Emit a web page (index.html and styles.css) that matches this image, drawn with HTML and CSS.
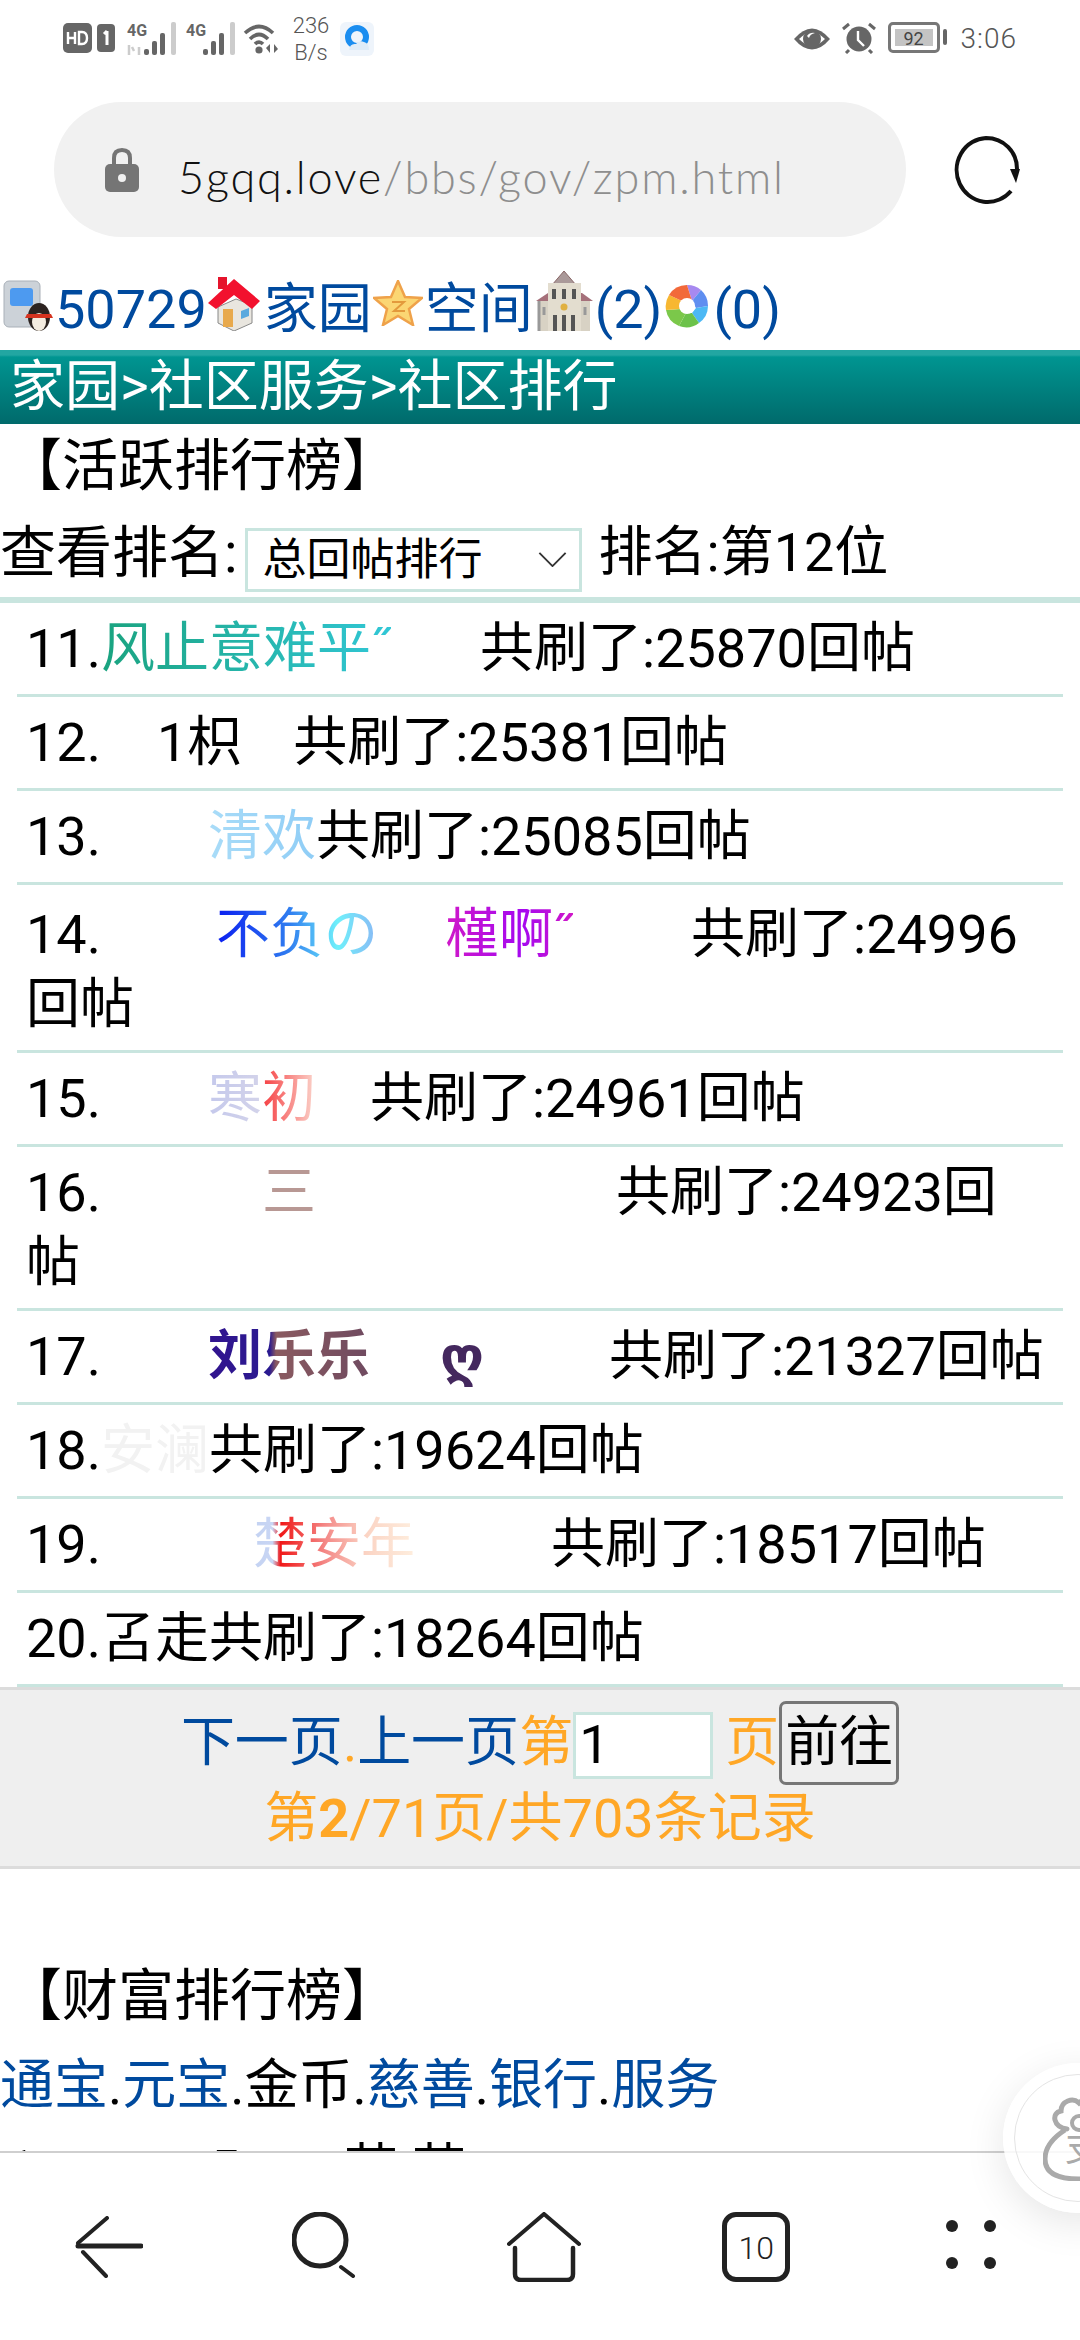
FILE: index.html
```html
<!DOCTYPE html>
<html lang="zh">
<head>
    <meta charset="UTF-8">
    <meta name="viewport" content="width=device-width, initial-scale=1.0">
    <title>社区排行</title>
    <link rel="stylesheet" href="styles.css">
</head>
<body>
<div class="phone">

    <div class="status-bar">
        <div class="status-left">
            <svg class="ic-hd" viewBox="0 0 54 31"><rect x="0" y="0" width="29" height="30" rx="5" fill="#666"/><rect x="34" y="1" width="18" height="28" rx="4" fill="#666"/><path d="M44 8v14M41 11l3-3" stroke="#fff" stroke-width="3" fill="none"/><path d="M5 9v12M5 15h7M12 9v12M16 9v12h3q5 0 5-6t-5-6z" stroke="#fff" stroke-width="2.4" fill="none"/></svg>
            <div class="sig">
                <span class="sig-label">4G</span>
                <svg viewBox="0 0 52 36" class="ic-sig"><path d="M2 24v10M7 30l-2-4M12 26v8" stroke="#ccc" stroke-width="2.5" fill="none"/><rect x="17" y="28" width="5" height="6" rx="2" fill="#666"/><rect x="25" y="20" width="5" height="14" rx="2" fill="#666"/><rect x="33" y="12" width="5" height="22" rx="2" fill="#666"/><rect x="44" y="1" width="5" height="33" rx="2" fill="#ccc"/></svg>
            </div>
            <div class="sig sig-b">
                <span class="sig-label">4G</span>
                <svg viewBox="0 0 52 36" class="ic-sig"><rect x="17" y="28" width="5" height="6" rx="2" fill="#666"/><rect x="25" y="20" width="5" height="14" rx="2" fill="#666"/><rect x="33" y="12" width="5" height="22" rx="2" fill="#666"/><rect x="44" y="1" width="5" height="33" rx="2" fill="#ccc"/></svg>
            </div>
            <svg class="ic-wifi" viewBox="0 0 38 32"><path d="M2 11q14-13 28 0M7 17q9-9 18 0M12 22q4-4 8 0" stroke="#666" stroke-width="3.6" fill="none"/><circle cx="16" cy="28" r="3.6" fill="#666"/><path d="M27 22v9l-4-5zM31 22v9l4-4z" fill="#666"/></svg>
            <div class="speed"><span>236</span><span>B/s</span></div>
            <svg class="ic-qq" viewBox="0 0 34 34"><rect width="34" height="34" rx="6" fill="#eef4fb"/><circle cx="17" cy="15" r="9" stroke="#1a8df0" stroke-width="6" fill="none"/><path d="M9 28q1-7 7-6 3-4 8-2 5 1 5 8z" fill="#dfecf8"/></svg>
        </div>
        <div class="status-right">
            <svg class="ic-eye" viewBox="0 0 38 28"><path d="M1 14Q19-7 37 14 19 35 1 14z" fill="#666"/><path d="M6 14Q19 1 32 14 19 27 6 14z" fill="#fff"/><circle cx="19" cy="14" r="9" fill="#666"/><path d="M14 11q3-4 8-3-5 1-6 5z" fill="#fff"/></svg>
            <svg class="ic-alarm" viewBox="0 0 34 32"><circle cx="17" cy="17" r="12.5" fill="#666"/><path d="M1 7l6-5M33 7l-6-5M7 28l-3 3M27 28l3 3" stroke="#666" stroke-width="3"/><path d="M16 9v9l6 6" stroke="#fff" stroke-width="2.4" fill="none"/></svg>
            <div class="battery"><div class="battery-fill">92</div></div>
            <div class="battery-tip"></div>
            <div class="clock">3:06</div>
        </div>
    </div>

    <div class="url-row">
        <div class="url-box">
            <svg class="ic-lock" viewBox="0 0 34 44"><path d="M9 20V10q0-8 8-8t8 8v10" stroke="#757575" stroke-width="4" fill="none"/><rect y="16" width="34" height="28" rx="5" fill="#757575"/><circle cx="17" cy="30" r="4" fill="#f1f1f1"/></svg>
            <div class="url-text">5gqq.love<span class="url-path">/bbs/gov/zpm.html</span></div>
        </div>
        <svg class="ic-reload" viewBox="0 0 68 68"><path d="M58 55A31 32 0 1 1 33 2c18 0 31 14 31 31" stroke="#111" stroke-width="4" fill="none"/><path d="M57 33h10l-4 14z" fill="#111"/></svg>
    </div>

    <div class="page">
        <div class="top-links">
            <svg class="pic pic-qq" viewBox="0 0 50 52"><rect x="1" y="1" width="36" height="46" rx="5" fill="#ccd2d8" stroke="#a9b0b8"/><rect x="7" y="8" width="23" height="18" rx="3" fill="#4d9af0"/><ellipse cx="36" cy="37" rx="11" ry="14" fill="#2c2320"/><ellipse cx="36" cy="42" rx="7" ry="9" fill="#f4ece0"/><path d="M24 34h24l2 4H22z" fill="#d5331f"/></svg><a>50729</a><svg class="pic pic-house" viewBox="0 0 52 54"><rect x="10" y="0" width="9" height="12" fill="#e5142c"/><path d="M10 30l18-8 16 6v18L26 54 10 46z" fill="#e9e6df" stroke="#888"/><path d="M0 26L26 2l26 22-8 8-18-14-18 14z" fill="#f2112e"/><rect x="15" y="32" width="10" height="18" fill="#e8a94c"/><path d="M33 34l8-3v8l-8 3z" fill="#5aa9de"/></svg><a>家园</a><svg class="pic pic-star" viewBox="0 0 50 46"><path d="M25 1l7 16 17 1-13 11 4 16-15-9-15 9 4-16L1 18l17-1z" fill="#fbd673" stroke="#efa24a" stroke-width="2.5"/><path d="M19 22h12l-10 9h11" stroke="#e39a3c" stroke-width="2" fill="none"/></svg><a>空间</a><svg class="pic pic-bank" viewBox="0 0 57 60"><path d="M28 0l12 14H16z" fill="#a99" stroke="#866"/><rect x="14" y="14" width="30" height="8" fill="#d6cfc2"/><path d="M0 30l12-8h34l11 8z" fill="#a5707a"/><rect x="3" y="30" width="51" height="30" fill="#d8d2c4"/><rect x="12" y="12" width="33" height="48" fill="#e3ddcf"/><path d="M18 18v10M28 18v10M38 18v10M19 44v16M28 44v16M37 44v16" stroke="#555" stroke-width="4"/><path d="M3 30v30M8 36v8M49 36v8" stroke="#999" stroke-width="3"/><circle cx="28" cy="36" r="3.5" fill="#e0b040"/></svg><a>(2)</a><svg class="pic pic-wheel" viewBox="0 0 44 44"><path d="M22 1a21 21 0 0 1 14 5l-9 11z" fill="#a789f0"/><path d="M36 6a21 21 0 0 1 7 16l-12 2-4-7z" fill="#5f8ef0"/><path d="M43 22a21 21 0 0 1-9 17l-7-10 4-5z" fill="#4cb8f4"/><path d="M34 39a21 21 0 0 1-20 3l7-13h6z" fill="#6cc24a"/><path d="M14 42A21 21 0 0 1 1 26l15-1 5 4z" fill="#7bc84a"/><path d="M1 26a21 21 0 0 1 3-15l13 6-1 8z" fill="#f7b731"/><path d="M4 11A21 21 0 0 1 22 1l5 16h-10z" fill="#f2693a"/><circle cx="22" cy="22" r="8" fill="#fff"/></svg><a>(0)</a>
        </div>

        <div class="crumb">家园&gt;社区服务&gt;社区排行</div>
        <div class="section-title">【活跃排行榜】</div>

        <div class="rank-pick">
            <span class="pick-label">查看排名:</span>
            <div class="fake-select">
                <span>总回帖排行</span>
                <svg class="ic-chev" viewBox="0 0 30 16"><path d="M1 1l14 14L29 1" stroke="#333" stroke-width="2" fill="none"/></svg>
            </div>
            <span class="my-rank">排名:第12位</span>
        </div>

        <div class="rank-list">
            <div class="line">11.<span class="nick grad-green">风止意难平˝</span><span class="after after-11">共刷了:25870回帖</span></div>
            <div class="line">12.<span class="nick nick-12">1枳</span><span class="after after-12">共刷了:25381回帖</span></div>
            <div class="line">13.<span class="nick nick-13 grad-sky">清欢</span><span>共刷了:25085回帖</span></div>
            <div class="line line-tall">14.<span class="nick nick-14 grad-blue">不负の</span><span class="nick nick-14b grad-violet">槿啊˝</span><span class="after after-14">共刷了:24996回帖</span></div>
            <div class="line">15.<span class="nick nick-15 grad-pale">寒初</span><span class="after after-15">共刷了:24961回帖</span></div>
            <div class="line">16.<span class="nick nick-16">三</span><span class="after after-16">共刷了:24923回帖</span></div>
            <div class="line">17.<span class="nick nick-17 grad-dark">刘乐乐</span><span class="nick nick-17b">ღ</span><span class="after after-17">共刷了:21327回帖</span></div>
            <div class="line">18.<span class="nick nick-18">安澜</span><span>共刷了:19624回帖</span></div>
            <div class="line">19.<span class="nick nick-19 grad-peach">楚安年</span><span class="after after-19">共刷了:18517回帖</span></div>
            <div class="line">20.<span class="nick">叾走</span><span>共刷了:18264回帖</span></div>
        </div>

        <div class="pager">
            <div class="pager-row">
                <a>下一页</a><span class="orange">.</span><a>上一页</a><span class="orange">第</span><div class="page-input">1</div><span class="orange page-word">页</span><div class="go-btn">前往</div>
            </div>
            <div class="pager-info">第<b>2</b>/71页/共703条记录</div>
        </div>

        <div class="section-title wealth-title">【财富排行榜】</div>
        <div class="wealth-tabs"><a>通宝</a>.<a>元宝</a>.金币.<a>慈善</a>.<a>银行</a>.<a>服务</a></div>
        <div class="peek">1.<span class="peek-a">5</span><span class="peek-b">苗</span><span class="peek-c">苗</span></div>
    </div>

    <div class="bottom-bar">
        <svg class="nav-ic ic-back" viewBox="0 0 68 62"><path d="M32 2L3 27M8 36l23 24" stroke="#222" stroke-width="4" fill="none" stroke-linecap="round"/><path d="M3 30h63" stroke="#222" stroke-width="5" stroke-linecap="round"/></svg>
        <svg class="nav-ic ic-search" viewBox="0 0 66 66"><circle cx="28" cy="28" r="26" stroke="#222" stroke-width="5" fill="none"/><path d="M49 55l12 9" stroke="#222" stroke-width="4" stroke-linecap="round"/></svg>
        <svg class="nav-ic ic-home" viewBox="0 0 74 70"><path d="M2 32L37 2l35 30" stroke="#222" stroke-width="4" fill="none" stroke-linecap="round"/><path d="M8 36v26q0 6 6 6h46q6 0 6-6V36" stroke="#222" stroke-width="4.5" fill="none" stroke-linecap="round"/></svg>
        <div class="tab-count">10</div>
        <div class="dots"><i></i><i></i><i></i><i></i></div>
    </div>

    <div class="float-btn">
        <div class="float-ring"></div>
        <svg viewBox="0 0 72 84" class="bag"><path d="M22 33C8 42 2 52 2 62c0 14 12 20 34 20s34-6 34-20c0-10-6-20-20-29" stroke="#aaa" stroke-width="5" fill="none"/><path d="M24 32C10 30 8 16 18 14 18 4 30 0 36 6c6-6 18-2 18 8 10 2 8 16-6 18" stroke="#aaa" stroke-width="5" fill="none" stroke-linecap="round"/><circle cx="36" cy="26" r="7" stroke="#aaa" stroke-width="4" fill="#fff"/></svg>
        <span class="float-txt">支</span>
    </div>

</div>
</body>
</html>
```

FILE: styles.css
```css
* {
    box-sizing: border-box;
}

html, body {
    margin: 0;
    padding: 0;
}

body {
    background: #fff;
    font-family: "Roboto", "Noto Sans CJK SC", sans-serif;
    color: #000;
}

a {
    color: #004a9e;
}

.phone {
    position: relative;
    width: 1080px;
    height: 2340px;
    overflow: hidden;
    background: #fff;
}

/* status bar */
.status-bar {
    display: flex;
    justify-content: space-between;
    height: 102px;
    padding: 16px 63px 0 63px;
}

.status-left {
    display: flex;
    align-items: flex-start;
}

.status-right {
    display: flex;
    align-items: flex-start;
    padding-top: 6px;
}

.ic-hd {
    width: 54px;
    height: 31px;
    margin-top: 7px;
}

.sig {
    position: relative;
    width: 52px;
    height: 36px;
    margin: 5px 0 0 10px;
}

.sig-b {
    margin-left: 7px;
}

.ic-sig {
    width: 52px;
    height: 36px;
    display: block;
}

.sig-label {
    position: absolute;
    left: 0;
    top: 0;
    font: bold 16px "Roboto", sans-serif;
    color: #666;
}

.ic-wifi {
    width: 38px;
    height: 32px;
    margin: 6px 0 0 5px;
}

.speed {
    display: flex;
    flex-direction: column;
    align-items: center;
    width: 46px;
    margin-left: 7px;
    font-size: 22px;
    line-height: 27px;
    font-weight: 300;
    color: #555;
    margin-top: -4px;
}

.ic-qq {
    width: 34px;
    height: 34px;
    margin: 6px 0 0 6px;
}

.ic-eye {
    width: 38px;
    height: 28px;
    margin-top: 3px;
}

.ic-alarm {
    width: 34px;
    height: 32px;
    margin-left: 11px;
}

.battery {
    width: 52px;
    height: 31px;
    margin-left: 12px;
    padding: 4px;
    border: 3px solid #777;
    border-radius: 5px;
}

.battery-fill {
    height: 100%;
    background: #c4c4c4;
    font-size: 18px;
    line-height: 19px;
    text-align: center;
    color: #444;
}

.battery-tip {
    width: 4px;
    height: 16px;
    margin: 7px 0 0 3px;
    background: #666;
    border-radius: 2px;
}

.clock {
    margin-left: 14px;
    font-size: 28px;
    font-weight: 300;
    line-height: 34px;
    color: #555;
    letter-spacing: 1px;
}

/* address bar */
.url-row {
    display: flex;
    align-items: center;
    height: 135px;
    padding-left: 54px;
}

.url-box {
    display: flex;
    align-items: center;
    width: 852px;
    height: 135px;
    padding-left: 51px;
    background: #f1f1f1;
    border-radius: 68px;
}

.ic-lock {
    width: 34px;
    height: 44px;
}

.url-text {
    margin-left: 39px;
    padding-top: 14px;
    font-family: "Lato", sans-serif;
    font-size: 45px;
    font-weight: 300;
    letter-spacing: 1.8px;
    color: #111;
}

.url-path {
    color: #8e8e8e;
}

.ic-reload {
    width: 68px;
    height: 68px;
    margin-left: 47px;
}

/* page content */
.page {
    font-size: 54px;
    line-height: 74px;
}

.top-links {
    display: flex;
    align-items: flex-end;
    height: 113px;
    padding: 0 0 10px 3px;
}

.top-links a {
    line-height: 60px;
}

.pic {
    display: block;
    flex: none;
    margin-bottom: 8px;
}

.pic-qq { width: 50px; height: 52px; margin-right: 2px; }
.pic-house { width: 52px; height: 54px; margin: 0 4px 9px 1px; }
.pic-star { width: 50px; height: 46px; margin: 0 2px 14px 1px; }
.pic-bank { width: 57px; height: 60px; margin: 0 2px 9px 3px; }
.pic-wheel { width: 44px; height: 44px; margin: 0 4px 12px 3px; }

.crumb {
    height: 74px;
    padding-left: 10px;
    font-size: 55px;
    line-height: 72px;
    color: #fff;
    background: linear-gradient(#22a6a2 0, #22a6a2 5px, #009591 7px, #006a6b 100%);
}

.section-title {
    padding-left: 6px;
    font-size: 56px;
    line-height: 84px;
}

.rank-pick {
    display: flex;
    align-items: center;
    height: 89px;
}

.pick-label {
    font-size: 56px;
}

.fake-select {
    display: flex;
    align-items: center;
    justify-content: space-between;
    flex: none;
    width: 337px;
    height: 64px;
    margin: 14px 0 0 7px;
    padding: 0 12px 0 15px;
    border: 3px solid #c9e5df;
    font-size: 44px;
    line-height: 58px;
}

.ic-chev {
    width: 29px;
    height: 15px;
}

.my-rank {
    margin-left: 17px;
}

.rank-list {
    border-top: 6px solid #c9e5df;
    padding: 0 17px;
    line-height: 70px;
}

.line {
    padding: 11px 16px 10px 9px;
    border-bottom: 3px solid #c9e5df;
}

.line:first-child {
    padding-top: 11px;
}

.line-tall {
    padding-top: 15px;
}

.grad-green,
.grad-sky,
.grad-blue,
.grad-violet,
.grad-pale,
.grad-dark,
.grad-peach {
    color: transparent;
    -webkit-background-clip: text;
    background-clip: text;
}

.grad-green { background-image: linear-gradient(90deg, #1aa37f, #31c7d6); }
.grad-sky { background-image: linear-gradient(90deg, #a9dcf8, #8fcdf6); }
.grad-blue { background-image: linear-gradient(90deg, #0a1df0, #2f7cf0 45%, #6ff0fb 75%, #8ab8f5); }
.grad-violet { background-image: linear-gradient(90deg, #d018c8, #a508f0 60%, #d018c8); }
.grad-pale { background-image: linear-gradient(90deg, #c5c9ec 0, #d3d3ea 50%, #f6474a 53%, #fbd5cc 100%); }
.grad-dark { background-image: linear-gradient(90deg, #32148f 0, #2a1a90 38%, #8a5a60 42%, #6f4a60 100%); }
.grad-peach { background-image: linear-gradient(90deg, #c3d2f2 0, #c9d6f4 12%, #f01818 17%, #f48a88 45%, #fbd4c4 70%, #feeede 100%); }

.nick-12 { margin-left: 56px; }
.nick-13 { margin-left: 107px; }
.nick-14 { margin-left: 115px; }
.nick-14b { margin-left: 67px; }
.nick-15 { margin-left: 107px; }
.nick-16 { margin-left: 161px; color: #b89894; }
.nick-17 { margin-left: 107px; font-weight: bold; }
.nick-17b { margin-left: 70px; font-weight: bold; color: #44285e; font-family: "DejaVu Sans", sans-serif; }
.nick-18 { color: #f2f2f2; }
.nick-19 { margin-left: 152px; }

.after-11 { margin-left: 89px; }
.after-12 { margin-left: 52px; }
.after-14 { margin-left: 118px; }
.after-15 { margin-left: 54px; }
.after-16 { margin-left: 300px; }
.after-17 { margin-left: 125px; }
.after-19 { margin-left: 136px; }

/* pager */
.pager {
    height: 182px;
    padding-top: 10px;
    background: #efefef;
    border-top: 3px solid #dcdcdc;
    border-bottom: 3px solid #dcdcdc;
    text-align: center;
}

.pager-row {
    display: flex;
    align-items: center;
    justify-content: center;
    height: 86px;
}

.orange {
    color: #ffa726;
}

.page-input {
    width: 140px;
    height: 67px;
    margin-top: 4px;
    padding-left: 3px;
    background: #fff;
    border: 3px solid #c9e5df;
    line-height: 60px;
    text-align: left;
}

.page-word {
    margin-left: 12px;
}

.go-btn {
    width: 120px;
    height: 84px;
    background: #efefef;
    border: 3px solid #767676;
    border-radius: 7px;
    line-height: 78px;
}

.pager-info {
    color: #ffa726;
    line-height: 66px;
}

.wealth-title {
    margin-top: 85px;
}

.wealth-tabs {
    margin-top: 11px;
    line-height: 74px;
}

.peek {
    margin-top: 10px;
    padding-left: 6px;
}

.peek-a {
    margin-left: 159px;
}

.peek-b {
    margin-left: 104px;
}

.peek-c {
    margin-left: 14px;
}

/* bottom toolbar */
.bottom-bar {
    position: absolute;
    left: 0;
    right: 0;
    top: 2151px;
    height: 189px;
    display: flex;
    justify-content: space-between;
    align-items: flex-start;
    padding: 59px 84px 0 75px;
    background: #fff;
    border-top: 2px solid #cfcfcf;
}

.ic-back { width: 68px; height: 62px; margin-top: 4px; }
.ic-search { width: 66px; height: 66px; }
.ic-home { width: 74px; height: 70px; }

.tab-count {
    width: 68px;
    height: 70px;
    margin: 0 7px 0 -7px;
    border: 5px solid #222;
    border-radius: 14px;
    font-size: 32px;
    font-weight: 300;
    line-height: 62px;
    text-align: center;
    color: #222;
}

.dots {
    display: grid;
    grid-template-columns: 12px 12px;
    grid-template-rows: 12px 12px;
    gap: 25px 26px;
    margin-top: 8px;
}

.dots i {
    background: #222;
    border-radius: 50%;
}

/* floating money bag button */
.float-btn {
    position: absolute;
    left: 1003px;
    top: 2063px;
    width: 150px;
    height: 150px;
    background: rgba(255, 255, 255, 0.86);
    border-radius: 50%;
    box-shadow: 0 10px 40px rgba(0, 0, 0, 0.1);
}

.float-ring {
    position: absolute;
    left: 11px;
    top: 11px;
    width: 128px;
    height: 128px;
    border: 1px solid #e4e4e4;
    border-radius: 50%;
}

.bag {
    position: absolute;
    left: 40px;
    top: 34px;
    width: 72px;
    height: 84px;
}

.float-txt {
    position: absolute;
    left: 62px;
    top: 66px;
    font-size: 36px;
    line-height: 40px;
    color: #aaa;
}
```
